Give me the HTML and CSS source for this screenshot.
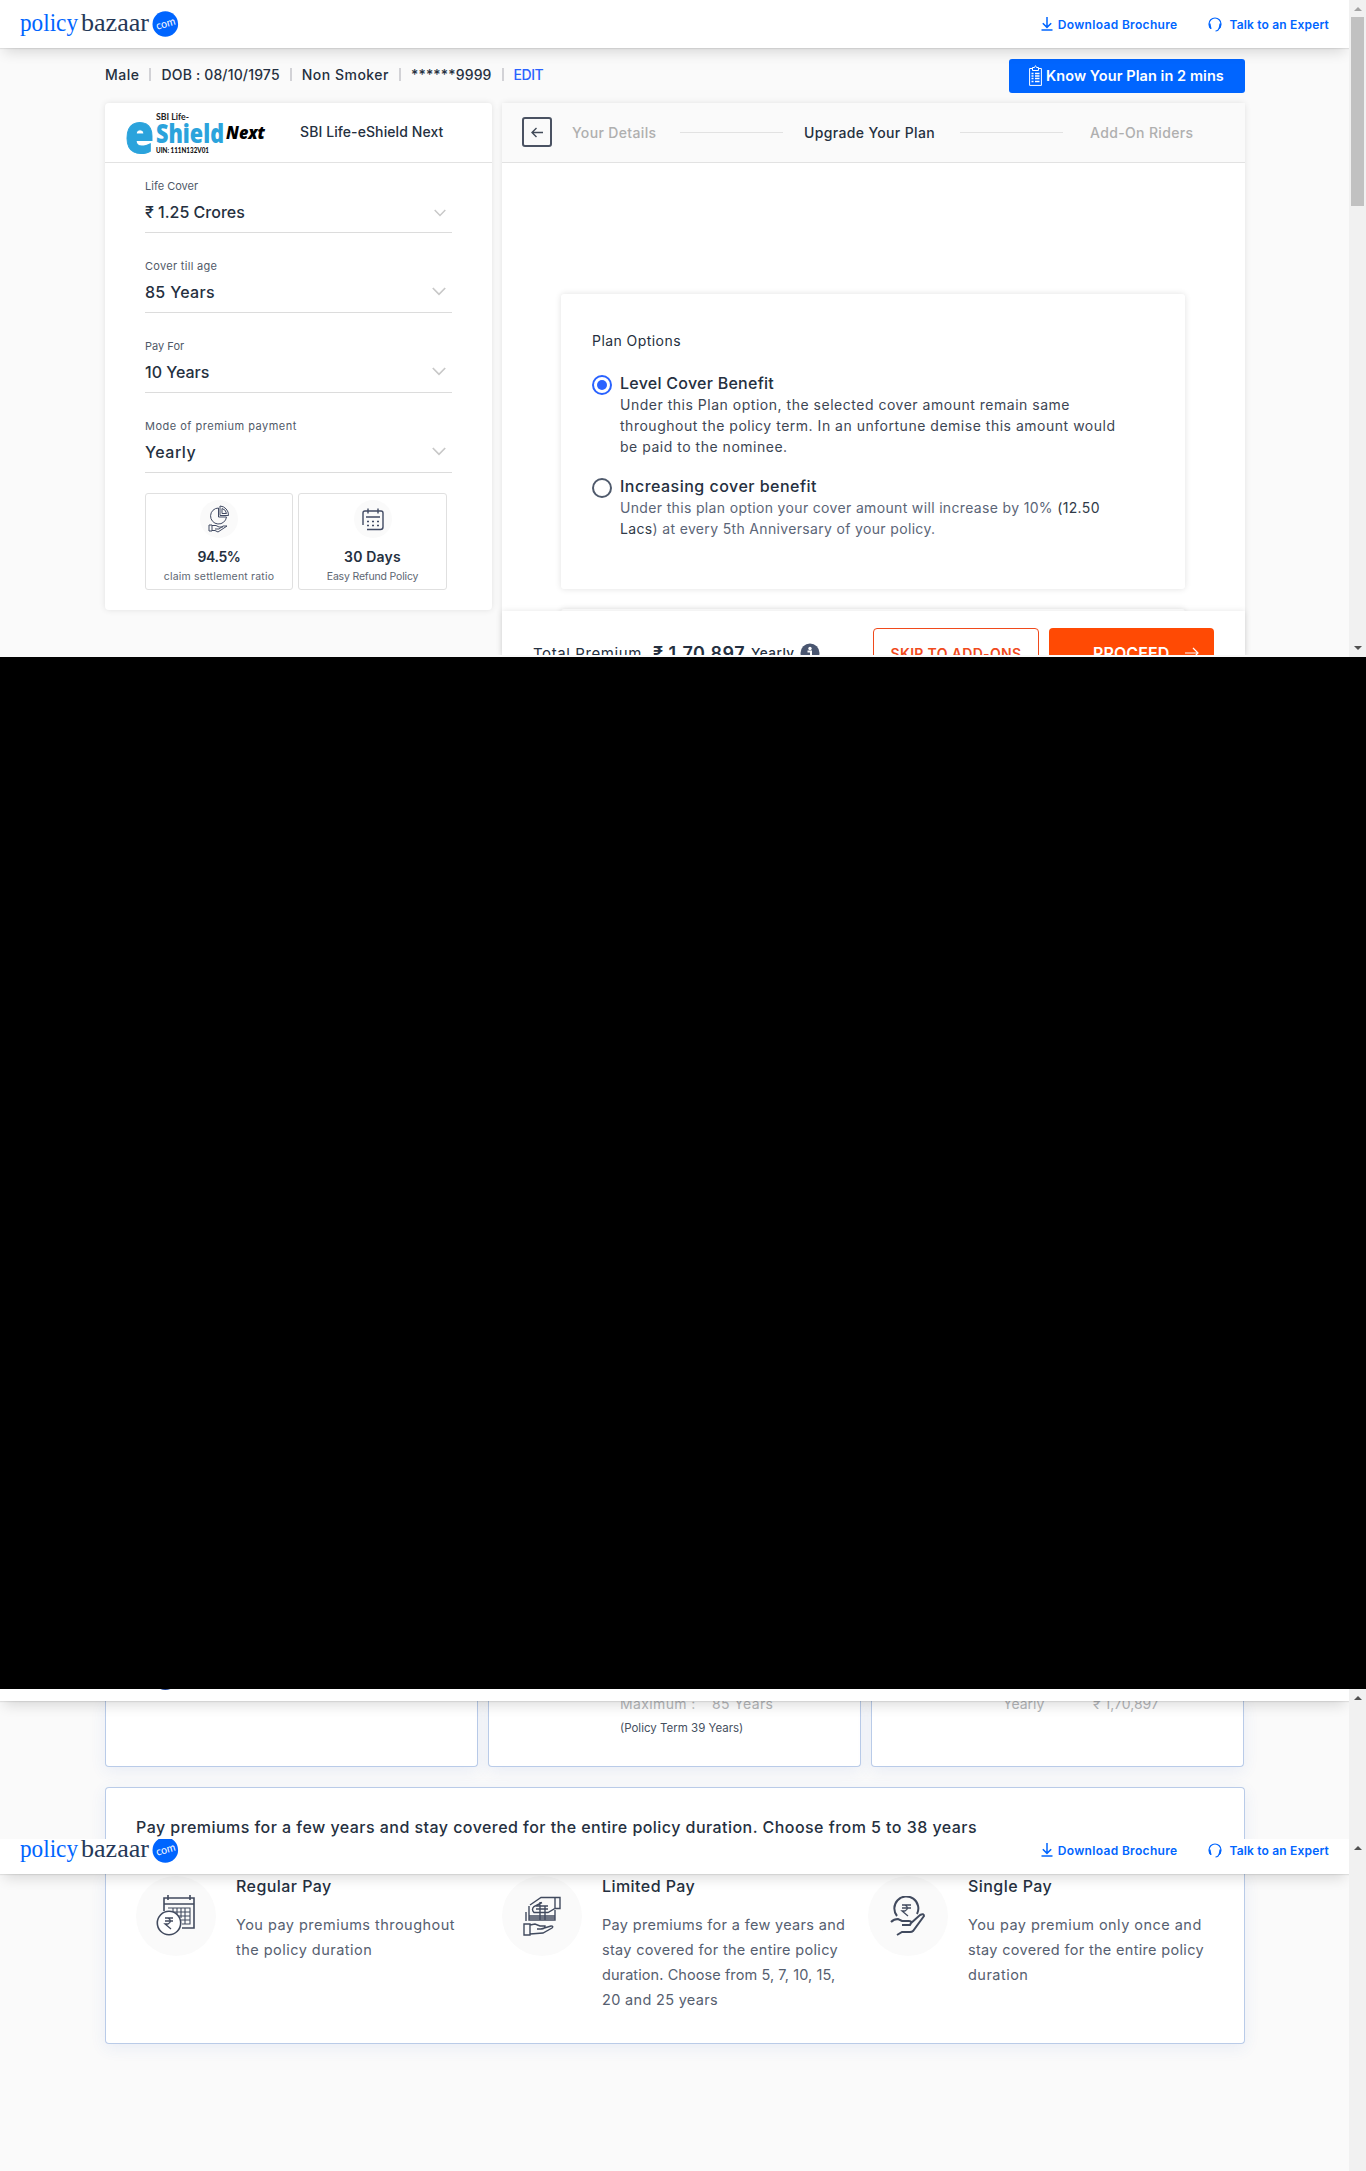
FILE: index.html
```html
<!DOCTYPE html>
<html lang="en">
<head>
<meta charset="utf-8">
<title>SBI Life-eShield Next</title>
<link rel="stylesheet" href="styles.css">
</head>
<body>
<svg class="defs" width="0" height="0" aria-hidden="true">
  <symbol id="logo" viewBox="0 0 160 30">
    <text x="0" y="21" font-family="Liberation Serif, serif" font-size="26" textLength="58" lengthAdjust="spacingAndGlyphs" fill="#0065ff">policy</text>
    <text x="61" y="21" font-family="Liberation Serif, serif" font-size="26" textLength="68" lengthAdjust="spacingAndGlyphs" fill="#253858">bazaar</text>
    <circle cx="145.3" cy="14" r="12.8" fill="#0065ff"/>
    <text x="136" y="17.500" font-family="Lato, sans-serif" font-size="11" textLength="19.500" lengthAdjust="spacingAndGlyphs" fill="#fff" transform="rotate(-16 145 14)">com</text>
  </symbol>
  <symbol id="download" viewBox="0 0 12 14"><path d="M6 0v10M1.8 6.2 6 10.4l4.2-4.2M.5 13h11" fill="none" stroke="#0065ff" stroke-width="1.5"/></symbol>
  <symbol id="headset" viewBox="0 0 14 15"><path d="M3 11.5C1 10 1 8.500 1 7a6 6 0 0 1 12 0c0 2-.3 3-2 4.500M7.500 14c1.500 0 3-.6 3.300-2.500" fill="none" stroke="#0065ff" stroke-width="1.200"/><path d="M1 6.500h1.500L3.500 12H2.500Q.5 10.500 1 6.500zM13 6.500h-1.500L10.500 12h1Q13.500 10.500 13 6.500z" fill="#0065ff"/></symbol>
  <symbol id="chevron" viewBox="0 0 14 9"><path d="m.8 1 6.200 6.300L13.200 1" fill="none" stroke="#c8c8c8" stroke-width="1.700"/></symbol>
</svg>

<section class="frame frame-top">
  <div class="view">
    <header class="topbar">
      <svg class="brand" width="160" height="30"><use href="#logo"/></svg>
      <nav class="links">
        <a class="link"><svg width="12" height="14"><use href="#download"/></svg><span>Download Brochure</span></a>
        <a class="link link-talk"><svg width="14" height="15"><use href="#headset"/></svg><span>Talk to an Expert</span></a>
      </nav>
    </header>
    <div class="info">
      <ul class="profile">
        <li class="wide">Male</li>
        <li>DOB : 08/10/1975</li>
        <li class="wide">Non Smoker</li>
        <li>******9999</li>
        <li class="edit">EDIT</li>
      </ul>
      <button class="know">
        <svg width="13" height="21" viewBox="0 0 13 21"><path d="M3 3.500H.6v16.900h11.800V3.500H10M3.500 5.500v-3h2Q6.500-.8 7.500 2.500h2v3z" fill="none" stroke="#fff"/><path d="M2.500 8.500h2M6 8.500h4.500M2.500 11h2M6 11h4.500M2.500 13.500h2M6 13.500h4.500M2.500 16.500h2M6 16.500h4.500" stroke="#fff" stroke-width="1.300"/></svg>
        <span>Know Your Plan in 2 mins</span>
      </button>
    </div>
    <div class="columns">
      <aside class="summary">
        <div class="product">
          <svg width="142" height="44" viewBox="0 0 142 44">
            <text x="0" y="41" font-family="Open Sans, sans-serif" font-weight="800" font-size="54" textLength="29" lengthAdjust="spacingAndGlyphs" fill="#2ba3dc" stroke="#2ba3dc">e</text>
            <text x="31" y="30.500" font-family="Open Sans, sans-serif" font-weight="800" font-size="26" textLength="68" lengthAdjust="spacingAndGlyphs" fill="#2ba3dc">Shield</text>
            <text x="31" y="7.500" font-family="Lato, sans-serif" font-weight="700" font-size="8.500" textLength="33" lengthAdjust="spacingAndGlyphs" fill="#222">SBI Life-</text>
            <text x="31" y="41" font-family="Lato, sans-serif" font-weight="900" font-size="7.500" textLength="53" lengthAdjust="spacingAndGlyphs" fill="#111">UIN: 111N132V01</text>
            <text x="101" y="27" font-family="Open Sans, sans-serif" font-weight="800" font-style="italic" font-size="18" textLength="39" lengthAdjust="spacingAndGlyphs" fill="#000">Next</text>
          </svg>
          <h1 class="product-name">SBI Life-eShield Next</h1>
        </div>
        <div class="fields">
          <div class="field"><label>Life Cover</label><div class="value"><span>₹ 1.25 Crores</span><svg class="chev-first" width="12" height="8"><use href="#chevron"/></svg></div></div>
          <div class="field"><label class="wide">Cover till age</label><div class="value wide">85 Years<svg width="14" height="9"><use href="#chevron"/></svg></div></div>
          <div class="field"><label>Pay For</label><div class="value">10 Years<svg width="14" height="9"><use href="#chevron"/></svg></div></div>
          <div class="field"><label class="wider">Mode of premium payment</label><div class="value wider">Yearly<svg width="14" height="9"><use href="#chevron"/></svg></div></div>
        </div>
        <div class="stats">
          <div class="stat stat-claims">
            <i class="disc"><svg width="22" height="28" viewBox="0 0 22 28" fill="none" stroke="#414a63"><path d="M10.500 3a8 8 0 1 0 8 9h-8zM12 1v9.500h8.500A9 9 0 0 0 12 1zM14 3.500v5h4.500Q18 4.500 14 3.500z"/><path d="M1 20h3v6H1zM4 20.500h4l3 1.500h4M4 25.500h3l3 1.500 9-6h-4l-4 3H7"/></svg></i>
            <b>94.5%</b><small>claim settlement ratio</small>
          </div>
          <div class="stat stat-days">
            <i class="disc"><svg width="22" height="23" viewBox="0 0 22 23" fill="none" stroke="#414a63"><path d="M1 17V5q0-2 2-2h16q2 0 2 2v14q0 2.500-2.500 2.500H5M4 9h14" stroke-width="1.400"/><path d="M6 .5v5M16 .5v5" stroke-width="1.400"/><path d="M5 13.500h2M10 13.500h2M15 13.500h2M5 17.500h2M10 17.500h2M15 17.500h2" stroke-width="1.500"/></svg></i>
            <b>30 Days</b><small>Easy Refund Policy</small>
          </div>
        </div>
      </aside>
      <main class="upgrade">
        <div class="steps">
          <button class="back"><svg width="12" height="11" viewBox="0 0 12 11"><path d="M12 5.500H1M5.500 1 1 5.500 5.500 10" fill="none" stroke="#414a58" stroke-width="1.400"/></svg></button>
          <span class="step s1">Your Details</span><hr>
          <span class="step s2">Upgrade Your Plan</span><hr>
          <span class="step s3">Add-On Riders</span>
        </div>
        <div class="options">
          <div class="card">
            <h2>Plan Options</h2>
            <div class="option">
              <i class="radio on"></i>
              <div><h3>Level Cover Benefit</h3>
              <p>Under this Plan option, the selected cover amount remain same<br>throughout the policy term. In an unfortune demise this amount would<br>be paid to the nominee.</p></div>
            </div>
            <div class="option">
              <i class="radio"></i>
              <div><h3 class="wider">Increasing cover benefit</h3>
              <p class="soft">Under this plan option your cover amount will increase by 10% <em>(12.50</em><br><em>Lacs</em>) at every 5th Anniversary of your policy.</p></div>
            </div>
          </div>
          <div class="card next-card"></div>
        </div>
        <footer class="premium">
          <span class="total">Total Premium</span>
          <span class="amount">₹ 1,70,897</span>
          <span class="mode">Yearly</span>
          <svg width="20" height="20" viewBox="0 0 20 20"><circle cx="10" cy="10" r="9.500" fill="#4a5670"/><circle cx="10" cy="5.500" r="1.700" fill="#fff"/><path d="M7.500 8.500h3.500V15" fill="none" stroke="#fff" stroke-width="2"/></svg>
          <button class="skip">SKIP TO ADD-ONS</button>
          <button class="proceed">PROCEED<svg width="14" height="12" viewBox="0 0 14 12"><path d="M0 6h13M8 1l5 5-5 5" fill="none" stroke="#fff" stroke-width="1.200"/></svg></button>
        </footer>
      </main>
    </div>
  </div>
  <div class="scroll"><i class="up dim"></i><i class="thumb"></i><i class="down"></i></div>
</section>

<div class="void"></div>

<section class="frame frame-mid">
  <div class="view">
    <header class="topbar"><svg class="brand" width="160" height="30" viewBox="0 0 160 30"><circle cx="145.3" cy="14.200" r="12.800" fill="#1d3f8c"/></svg></header>
    <div class="trio">
      <div class="tile"></div>
      <div class="tile tile-term">
        <div class="pair wide"><span class="max">Maximum :</span><span>85 Years</span></div>
        <p class="note">(Policy Term 39 Years)</p>
      </div>
      <div class="tile tile-price"><div class="pair"><span class="yr">Yearly</span><span>₹ 1,70,897</span></div></div>
    </div>
    <div class="pay-head"><h2>Pay premiums for a few years and stay covered for the entire policy duration. Choose from 5 to 38 years</h2></div>
  </div>
  <div class="scroll"><i class="up"></i></div>
</section>

<section class="frame frame-end">
  <div class="view">
    <header class="topbar">
      <svg class="brand" width="160" height="30"><use href="#logo"/></svg>
      <nav class="links">
        <a class="link"><svg width="12" height="14"><use href="#download"/></svg><span>Download Brochure</span></a>
        <a class="link link-talk"><svg width="14" height="15"><use href="#headset"/></svg><span>Talk to an Expert</span></a>
      </nav>
    </header>
    <div class="pay-body">
      <article class="pay">
        <i class="badge"><svg width="40" height="42" viewBox="0 0 40 42" fill="none" stroke="#414a5e" stroke-width="1.600"><path d="M8 16V3h30v30H26M8 9h30M12 0v5M34 0v5"/><path d="M12 13h22v16h-8M14 17h20M18 21h16M25 25h9M17 13v4M21 13v6M25 13v10M29 13v16" stroke-width="1.100"/><circle cx="13" cy="28" r="11.700" fill="#fff"/><path d="M9 23h8M9 26h8M9 23h3q5 3 0 6H9l6 5" stroke-width="1.300"/></svg></i>
        <div><h3>Regular Pay</h3><p class="wide">You pay premiums throughout<br>the policy duration</p></div>
      </article>
      <article class="pay">
        <i class="badge"><svg width="38" height="40" viewBox="0 0 38 40" fill="none" stroke="#414a5e" stroke-width="1.400"><path d="M7 9 18 1.500h19v11h-5l-7 4H11q-3-3 0-6l8-4M32 1.500v11M6 10v14h26V14M6 20h26M6 22h26M13 10h12M13 13h12M17 6v18M22 10v14M3 16v9"/><path d="M1 28h6v11H1zM7 29l5-1 5 2h5q0 3-4 3h-4M18 33l10-3q3 0 1 2l-9 5-13 1"/></svg></i>
        <div><h3>Limited Pay</h3><p>Pay premiums for a few years and<br>stay covered for the entire policy<br><span class="tight">duration. Choose from 5, 7, 10, 15,</span><br>20 and 25 years</p></div>
      </article>
      <article class="pay">
        <i class="badge"><svg width="36" height="40" viewBox="0 0 36 40" fill="none" stroke="#414a5e" stroke-width="2"><path d="M7 20a12 12 0 1 1 20-2"/><path d="M12 9h9M12 12h9M12 9h3q5 3 0 6h-3l6 5" stroke-width="1.300"/><path d="M1 26q3-3 7-3l4 2h7q4 0 1 4h-8M20 28l10-9q4-2 4 1L23 35q-1 1-3 1h-8l-5 3"/></svg></i>
        <div><h3>Single Pay</h3><p><span class="wide">You pay premium only once and</span><br>stay covered for the entire policy<br><span class="wide">duration</span></p></div>
      </article>
    </div>
  </div>
  <div class="scroll"><i class="up"></i></div>
</section>
</body>
</html>
```
FILE: styles.css
```css
* { box-sizing: border-box; }
body { margin: 0; background: #000; font-family: Inter, "Noto Sans", sans-serif; color: #253040; white-space: nowrap; }
h1, h2, h3, p, ul, hr { margin: 0; padding: 0; font-weight: 500; }
button { padding: 0; border: 0; font-family: inherit; }
svg { display: block; flex: none; }
i, em { font-style: normal; }
.defs { position: absolute; }

.frame { display: flex; overflow: hidden; background: #fafafa; }
.frame-top { height: 657px; }
.frame-mid { height: 150px; }
.frame-end { height: 332px; }
.void { height: 1032px; }
.view { flex: 1; min-width: 0; overflow: hidden; }
.frame-top .view { height: 655px; }

.scroll { width: 17px; background: #f1f1f1; display: flex; flex-direction: column; align-items: center; }
.up { margin-top: 7px; border: 4px solid transparent; border-top: 0; border-bottom: 4px solid #505050; }
.dim { border-bottom-color: #a3a3a3; }
.thumb { margin-top: 6px; width: 13px; height: 189px; background: #c1c1c1; }
.down { margin-top: 440px; border: 4px solid transparent; border-bottom: 0; border-top: 4px solid #505050; }

.topbar { position: relative; z-index: 2; height: 48px; display: flex; justify-content: space-between; background: #fff; padding: 0 20px; box-shadow: 0 8px 14px -4px rgba(0, 0, 0, .14), 0 1px 1px rgba(0, 0, 0, .08); }
.brand { margin-top: 10px; }
.links { display: flex; align-items: center; font-size: 12px; font-weight: 600; }
.link { display: flex; align-items: center; gap: 5px; color: #0065ff; letter-spacing: .325px; }
.link-talk { margin-left: 31px; gap: 7px; letter-spacing: .175px; }

.info { display: flex; justify-content: space-between; height: 55px; padding: 11px 104px 0 105px; }
.profile { display: flex; list-style: none; height: 31px; align-items: center; font-size: 14px; font-weight: 500; letter-spacing: .16px; }
.profile li { display: flex; align-items: center; }
.profile .wide { letter-spacing: .5px; }
.profile li + li::before { content: ""; width: 2px; height: 13px; margin: 0 10px; background: #d2d2d6; }
.profile .edit { color: #2962ff; letter-spacing: -.45px; }
.know { width: 236px; height: 34px; display: flex; align-items: center; gap: 4px; padding: 0 0 2px 20px; border-radius: 3px; background: #0065ff; color: #fff; font-size: 14.500px; font-weight: 600; letter-spacing: .07px; }

.columns { display: flex; gap: 10px; padding: 0 104px 0 105px; align-items: flex-start; }
.summary { width: 387px; height: 507px; background: #fff; border-radius: 4px; box-shadow: 0 0 6px rgba(0, 0, 0, .1); }
.product { height: 60px; display: flex; border-bottom: 1px solid #e2e2e2; padding: 9px 0 0 20px; }
.product-name { margin-left: 33px; font-size: 14px; line-height: 40px; letter-spacing: .09px; }
.fields { padding: 10px 40px 0; }
.field { height: 80px; }
.field label { display: block; height: 26px; line-height: 26px; font-size: 11px; color: #4f5968; }
.field .wide { letter-spacing: .3px; }
.field .wider { letter-spacing: .5px; }
.value { display: flex; justify-content: space-between; align-items: center; height: 34px; padding: 0 6px 8px 0; width: 307px; border-bottom: 1px solid #dcdcdc; font-size: 16px; font-weight: 500; }
.chev-first { margin-top: 3px; }
.stats { display: flex; gap: 5px; padding-left: 40px; }
.stat { width: 148px; height: 97px; border: 1px solid #e0e0e0; border-radius: 3px; display: flex; flex-direction: column; align-items: center; padding-top: 6px; }
.stat-days { width: 149px; }
.disc { width: 38px; height: 38px; border-radius: 50%; background: #fafafa; display: grid; place-items: center; }
.stat b { margin-top: 8px; font-size: 14px; line-height: 22px; font-weight: 600; }
.stat small { font-size: 10.500px; line-height: 18px; color: #5d6672; }
.stat-claims b { letter-spacing: -.4px; }
.stat-claims small { letter-spacing: .2px; }
.stat-days b { letter-spacing: .2px; }
.stat-days small { letter-spacing: -.18px; }

.upgrade { width: 743px; height: 552px; background: #fff; border-radius: 4px; box-shadow: 0 0 6px rgba(0, 0, 0, .1); }
.steps { display: flex; align-items: center; height: 60px; padding: 0 0 1px 20px; background: #fafafa; border-bottom: 1px solid #e2e2e2; font-size: 14px; font-weight: 500; letter-spacing: .35px; color: #afafaf; }
.steps hr { width: 103px; border: 0; border-top: 1px solid #e2e2e2; }
.back { width: 30px; height: 30px; border: 2px solid #4a5262; border-radius: 3px; background: none; display: grid; place-items: center; }
.s1 { width: 108px; margin-left: 20px; }
.s2 { width: 156px; margin-left: 21px; color: #253040; }
.s3 { margin-left: 27px; }
.options { height: 448px; padding: 131px 60px 0 59px; overflow: hidden; }
.card { height: 295px; border-radius: 3px; background: #fff; box-shadow: 0 0 6px rgba(0, 0, 0, .12); padding: 37px 31px; }
.next-card { margin-top: 20px; height: 40px; }
.card h2 { font-size: 14px; line-height: 20px; font-weight: 400; margin-bottom: 22px; letter-spacing: .44px; }
.option { display: flex; gap: 8px; margin-bottom: 20px; }
.radio { flex: none; width: 20px; height: 20px; margin-top: 2px; border: 2px solid #4f5a6c; border-radius: 50%; display: grid; place-items: center; }
.radio.on { border-color: #2962ff; }
.radio.on::before { content: ""; width: 10px; height: 10px; border-radius: 50%; background: #2962ff; }
.option h3 { font-size: 16px; line-height: 20px; letter-spacing: .26px; }
.option .wider { letter-spacing: .48px; }
.option p { position: relative; top: 1px; font-size: 14px; line-height: 21px; font-weight: 400; letter-spacing: .515px; color: #3d4654; }
.option .soft { letter-spacing: .34px; color: #5b6577; }
.soft em { color: #303a48; }

.premium { position: relative; height: 84px; display: flex; align-items: center; background: #fff; padding: 0 31px; box-shadow: 0 0 6px rgba(0, 0, 0, .1); }
.total { width: 120px; font-size: 15px; letter-spacing: .59px; }
.amount { width: 98px; font-size: 18px; font-weight: 600; letter-spacing: .46px; }
.mode { width: 49px; font-size: 13.500px; font-weight: 500; letter-spacing: .5px; }
.skip { width: 166px; height: 50px; margin-left: 53px; border: 1px solid #f04a1c; border-radius: 4px; background: #fff; color: #f04a1c; font-size: 14px; font-weight: 600; letter-spacing: .34px; }
.proceed { width: 165px; height: 50px; margin-left: 10px; padding-left: 44px; display: flex; align-items: center; gap: 16px; border-radius: 4px; background: #ff4a04; color: #fff; font-size: 16px; font-weight: 600; letter-spacing: .1px; }

.frame-mid .topbar { margin-top: -36px; }
.trio { display: flex; gap: 10px; padding-left: 105px; }
.tile { width: 373px; height: 66px; border: 1px solid #b9cbe8; border-top: 0; border-radius: 0 0 4px 4px; background: #fff; box-shadow: 0 4px 16px rgba(60, 100, 200, .09); }
.tile-term, .tile-price { padding-left: 131px; }
.pair { display: flex; height: 18px; margin-top: -6px; line-height: 18px; font-size: 14px; color: #b5b7ba; }
.pair.wide { letter-spacing: .37px; }
.max { width: 92px; }
.yr { width: 90px; }
.note { margin-top: 5px; font-size: 11.500px; line-height: 20px; font-weight: 400; color: #46505f; }
.pay-head { width: 1140px; height: 60px; margin: 20px 0 0 105px; border: 1px solid #b9cbe8; border-bottom: 0; border-radius: 4px 4px 0 0; background: #fff; padding: 27px 30px; box-shadow: 0 4px 16px rgba(60, 100, 200, .09); }
.pay-head h2 { font-size: 16px; line-height: 24px; letter-spacing: .452px; }

.frame-end .topbar { margin-top: -13px; }
.pay-body { width: 1140px; height: 170px; margin-left: 105px; display: flex; border: 1px solid #b9cbe8; border-top: 0; border-radius: 0 0 4px 4px; background: #fff; padding-left: 30px; box-shadow: 0 4px 16px rgba(60, 100, 200, .09); }
.pay { width: 366px; display: flex; gap: 20px; }
.badge { flex: none; width: 80px; height: 80px; margin-top: 2px; border-radius: 50%; background: #fafafa; display: grid; place-items: center; }
.pay h3 { font-size: 16px; line-height: 24px; letter-spacing: .44px; }
.pay p { margin-top: 14px; font-size: 14.500px; line-height: 25px; font-weight: 400; letter-spacing: .32px; color: #566070; }
.pay p.wide, .pay .wide { letter-spacing: .47px; }
.pay .tight { letter-spacing: .08px; }
```
